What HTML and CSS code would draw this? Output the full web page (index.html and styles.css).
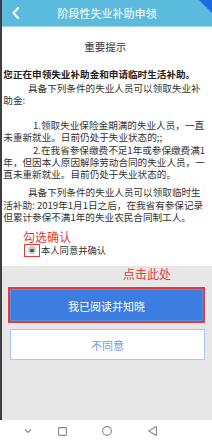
FILE: index.html
```html
<!DOCTYPE html>
<html lang="zh-CN">
<head>
<meta charset="utf-8">
<title>阶段性失业补助申领</title>
<link rel="stylesheet" href="styles.css">
</head>
<body>
<div class="screen">
  <header class="bar">
    <svg class="back" width="7" height="12" viewBox="0 0 7 12"><polyline points="6,1 1.5,6 6,11" fill="none" stroke="#fff" stroke-width="2" stroke-linecap="round" stroke-linejoin="round"/></svg>
    <h1 class="bar-title">阶段性失业补助申领</h1>
    <span class="corner"></span>
  </header>
  <main class="notice">
    <h2 class="notice-title">重要提示</h2>
    <p class="lead">您正在申领失业补助金和申请临时生活补助。</p>
    <p class="para p1">具备下列条件的失业人员可以领取失业补助金:</p>
    <p class="item i1">1.领取失业保险金期满的失业人员，一直未重新就业。日前仍处于失业状态的;;</p>
    <p class="item">2.在我省参保缴费不足1年或参保缴费满1年，但因本人原因解除劳动合同的失业人员，一直未重新就业。目前仍处于失业状态的。</p>
    <p class="para p3">具备下列条件的失业人员可以领取临时生活补助: 2019年1月1日之后，在我省有参保记录但累计参保不满1年的失业农民合同制工人。</p>
    <p class="hint hint-check">勾选确认</p>
    <label class="agree"><span class="radio-box"><span class="radio"></span></span>本人同意并确认</label>
  </main>
  <section class="actions">
    <p class="hint hint-click">点击此处</p>
    <div class="primary-wrap"><button class="primary">我已阅读并知晓</button></div>
    <button class="secondary">不同意</button>
  </section>
</div>
<nav class="sysnav">
  <svg class="nav-ic ic-down" width="8" height="6" viewBox="0 0 8 6"><polyline points="1,1.5 4,4.5 7,1.5" fill="none" stroke="#8a8a8a" stroke-width="1.1"/></svg>
  <svg class="nav-ic ic-square" width="9" height="9" viewBox="0 0 9 9"><rect x="0.6" y="0.6" width="7.8" height="7.8" rx="0.8" fill="none" stroke="#8a8a8a" stroke-width="1.1"/></svg>
  <svg class="nav-ic ic-circle" width="10" height="10" viewBox="0 0 10 10"><circle cx="5" cy="5" r="4.4" fill="none" stroke="#8a8a8a" stroke-width="1.1"/></svg>
  <svg class="nav-ic ic-back" width="9" height="10" viewBox="0 0 9 10"><polygon points="8.4,0.6 8.4,9.4 0.8,5" fill="none" stroke="#8a8a8a" stroke-width="1.1" stroke-linejoin="round"/></svg>
</nav>
</body>
</html>
```
FILE: styles.css
```css
* { box-sizing: border-box; }
html, body { margin: 0; padding: 0; }
body {
  width: 212px;
  height: 442px;
  overflow: hidden;
  font-family: "Noto Sans CJK SC", "Noto Sans", sans-serif;
  color: #333;
  background: #fff;
}
.screen {
  height: 420px;
  display: flex;
  flex-direction: column;
  border-left: 2px solid #3e3e3e;
}
.bar {
  position: relative;
  height: 27px;
  flex: none;
  background: #5bbbdc;
  border-bottom: 1px solid #9fd6ea;
  display: grid;
  grid-template-columns: 30px 1fr 30px;
  align-items: center;
  overflow: hidden;
}
.back { margin-left: 10px; margin-top: -1px; display: block; }
.bar-title {
  grid-column: 2;
  margin: 0;
  text-align: center;
  font-size: 11px;
  font-weight: normal;
  line-height: 14px;
  color: #fff;
}
.corner {
  position: absolute;
  top: 0;
  right: 0;
  width: 13px;
  height: 13px;
  background: #1c6be0;
  clip-path: polygon(0 0, 100% 0, 100% 100%);
}
.notice {
  flex: none;
  background: #fff;
  padding: 0 4.7px 9.5px 1.3px;
  font-size: 9.6px;
  line-height: 12.4px;
}
.notice p { margin: 0; }
.notice-title {
  margin: 12px 0 0;
  text-align: center;
  font-size: 10.5px;
  line-height: 15px;
  font-weight: normal;
  color: #333;
}
.notice .lead { margin-top: 13.8px; font-weight: bold; color: #222; }
.notice .para { text-indent: 24.7px; }
.notice .p1 { margin-top: 1.6px; }
.notice .item { text-indent: 29.7px; }
.notice .i1 { margin-top: 12.2px; }
.notice .p3 { margin-top: 5.4px; }
.hint {
  margin: 0;
  font-size: 12px;
  line-height: 14px;
  color: #e8393b;
}
.notice .hint-check { margin-top: 7px; padding-left: 19.7px; }
.agree {
  display: flex;
  align-items: center;
  height: 13px;
  margin-top: -0.5px;
  padding-left: 20.7px;
  font-size: 9.3px;
  color: #333;
}
.radio-box {
  width: 16px;
  height: 13px;
  border: 1.3px solid #e8393b;
  display: flex;
  align-items: center;
  justify-content: center;
  margin-right: 1px;
}
.radio {
  width: 8px;
  height: 8px;
  border-radius: 50%;
  background: #c9c9c9;
  display: flex;
  align-items: center;
  justify-content: center;
}
.radio::after {
  content: "";
  width: 3.5px;
  height: 3.5px;
  border-radius: 50%;
  background: #4a4a4a;
}
.actions {
  flex: 1;
  background: #e7e7e7;
  padding-top: 1px;
}
.hint-click { padding-left: 121px; }
.primary-wrap {
  margin: 6px 7px 0 6px;
  border: 2px solid #e53a3a;
  height: 36px;
}
.primary {
  display: block;
  width: 100%;
  height: 100%;
  border: none;
  border: 1px solid #5a90e4;
  background: #3b7de0;
  color: #fff;
  font-family: inherit;
  font-size: 11px;
  padding: 2px 0 0;
}
.secondary {
  display: block;
  width: 195px;
  height: 31px;
  margin: 6px 0 0 8px;
  border: 1px solid #a9c5f2;
  background: #fff;
  color: #6d9ce8;
  font-family: inherit;
  font-size: 11px;
  padding: 0;
}
.sysnav {
  height: 22px;
  background: #fff;
  display: flex;
  align-items: center;
}
.nav-ic { display: block; flex: none; }
.ic-down { margin-left: 24px; }
.ic-square { margin-left: 26px; }
.ic-circle { margin-left: 35px; }
.ic-back { margin-left: 36px; }
```
